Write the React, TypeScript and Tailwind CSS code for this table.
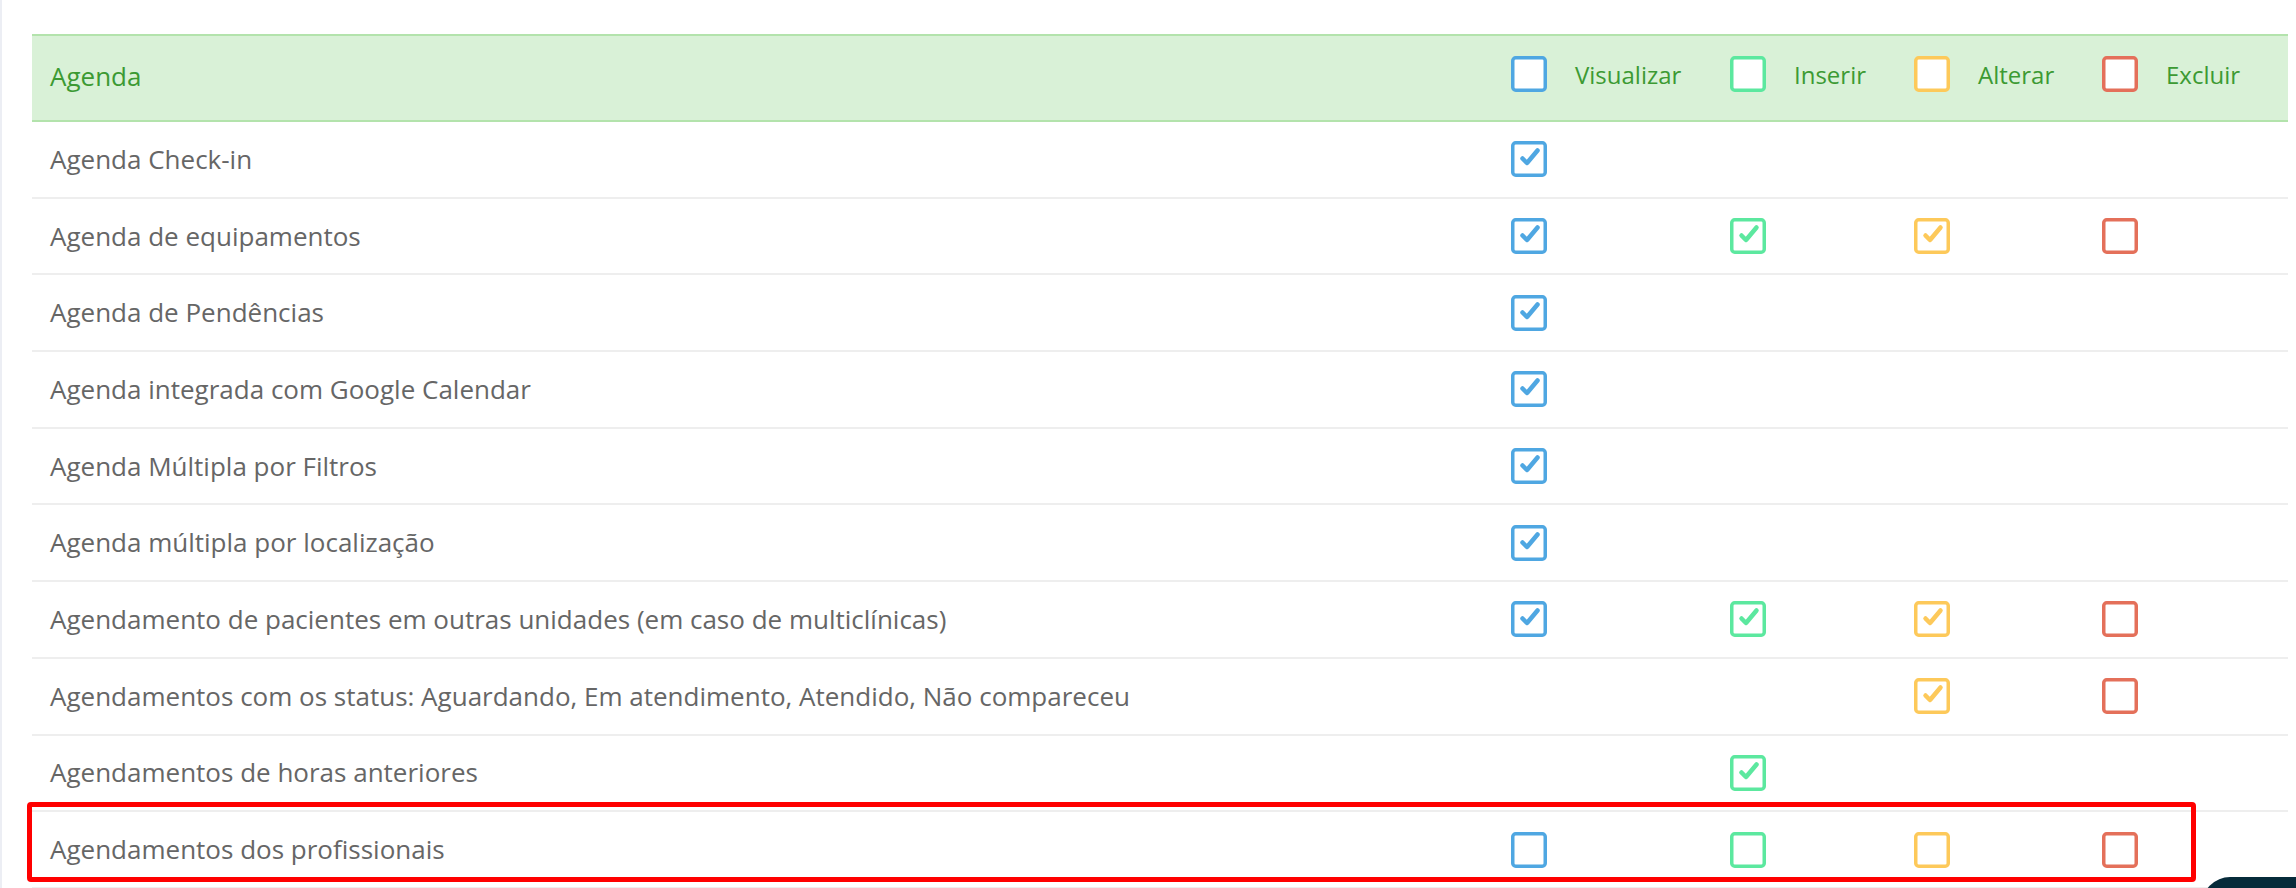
import React from "react";

type Perm = boolean | null;

const colors = {
  v: "#4fa7e2",
  i: "#5ce89f",
  a: "#fdc95a",
  e: "#e4705a",
};

const headers = [
  { key: "v", label: "Visualizar", color: colors.v },
  { key: "i", label: "Inserir", color: colors.i },
  { key: "a", label: "Alterar", color: colors.a },
  { key: "e", label: "Excluir", color: colors.e },
];

const rows: { name: string; perms: [Perm, Perm, Perm, Perm] }[] = [
  { name: "Agenda Check-in", perms: [true, null, null, null] },
  { name: "Agenda de equipamentos", perms: [true, true, true, false] },
  { name: "Agenda de Pendências", perms: [true, null, null, null] },
  { name: "Agenda integrada com Google Calendar", perms: [true, null, null, null] },
  { name: "Agenda Múltipla por Filtros", perms: [true, null, null, null] },
  { name: "Agenda múltipla por localização", perms: [true, null, null, null] },
  {
    name: "Agendamento de pacientes em outras unidades (em caso de multiclínicas)",
    perms: [true, true, true, false],
  },
  {
    name: "Agendamentos com os status: Aguardando, Em atendimento, Atendido, Não compareceu",
    perms: [null, null, true, false],
  },
  { name: "Agendamentos de horas anteriores", perms: [null, true, null, null] },
  { name: "Agendamentos dos profissionais", perms: [false, false, false, false] },
];

const Checkbox = ({ color, checked }: { color: string; checked: boolean }) => (
  <svg width="36" height="36" viewBox="0 0 36 36" className="shrink-0">
    <rect x="1.75" y="1.75" width="32.5" height="32.5" rx="3" fill="#fff" stroke={color} strokeWidth="3.5" />
    {checked && (
      <path
        d="M11.5 17.5 L16 22 L26.5 9.5"
        fill="none"
        stroke={color}
        strokeWidth="4.5"
        strokeLinecap="round"
        strokeLinejoin="round"
      />
    )}
  </svg>
);

const gridCols = "grid grid-cols-[1fr_219px_184px_188px_186px]";

export default function App() {
  return (
    <div className="relative h-[888px] w-full overflow-hidden bg-white border-l-2 border-[#eceef4] pt-[34px] pl-[30px] pr-[8px] font-['Open_Sans',sans-serif]">
      <div className="w-full">
        <div className={`${gridCols} h-[88px] items-center pb-[8px] bg-[#d9f1d7] border-y-2 border-[#b3e3ac] text-[#3c9a33]`}>
          <span className="pl-[18px] pt-[5px] text-[26px]">Agenda</span>
          {headers.map((h) => (
            <div key={h.key} className="flex items-center gap-[28px]">
              <Checkbox color={h.color} checked={false} />
              <span className="pt-[2px] text-[24px]">{h.label}</span>
            </div>
          ))}
        </div>

        {rows.map((row) => (
          <div
            key={row.name}
            className={`${gridCols} h-[76.7px] items-center border-b-2 border-[#eeeeee]`}
          >
            <span className="pl-[18px] text-[26px] text-[#666666]">{row.name}</span>
            {row.perms.map((p, idx) => (
              <div key={idx} className="flex items-center">
                {p !== null && <Checkbox color={headers[idx].color} checked={p} />}
              </div>
            ))}
          </div>
        ))}
      </div>

      {/* annotation */}
      <div className="absolute left-[25px] top-[802px] w-[2169px] h-[80px] border-[5px] border-[#ff0000] rounded-[4px]" />

      {/* chat widget peeking */}
      <div className="absolute left-[2200px] top-[877px] w-[200px] h-[80px] rounded-[28px] bg-[#062b3a]" />
    </div>
  );
}
